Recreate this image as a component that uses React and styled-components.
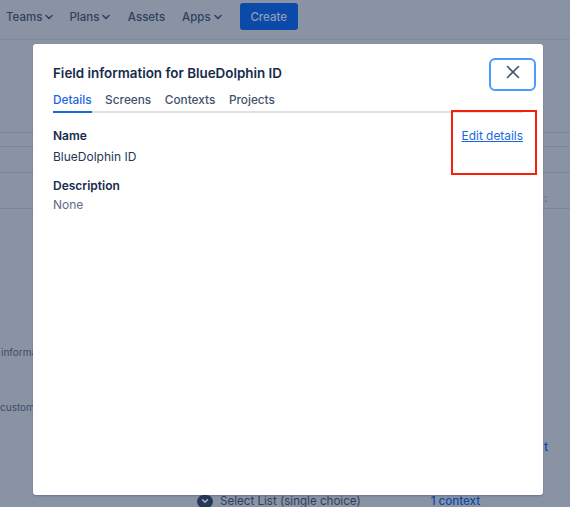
import React from 'react'
import styled, { createGlobalStyle } from 'styled-components'
import { ChevronDown, X } from 'lucide-react'

const Global = createGlobalStyle`
  html, body {
    margin: 0;
    padding: 0;
    height: 100%;
    overflow: hidden;
    background: #8993a4;
  }
  body {
    font-family: Inter, "Liberation Sans", sans-serif;
    -webkit-font-smoothing: antialiased;
  }
`

const Page = styled.div`
  position: relative;
  width: 570px;
  height: 507px;
  overflow: hidden;
  background: #8993a4;
  color: #253858;
`

const Nav = styled.nav`
  display: flex;
  align-items: center;
  height: 40px;
  padding: 0 0 6px 6px;
  border-bottom: 1px solid #7f899b;
  box-sizing: border-box;
`

const NavItem = styled.span`
  display: flex;
  align-items: center;
  margin-right: ${p => p.$gap}px;
  font-size: 11.5px;
  font-weight: 500;
  color: #2f3f5e;
`

const NavChevron = styled(ChevronDown)`
  margin: 1px 1px 0;
`

const CreateButton = styled.span`
  display: flex;
  align-items: center;
  justify-content: center;
  width: 58px;
  height: 27px;
  margin-left: 6px;
  border-radius: 3px;
  background: #0b4aa8;
  color: #8f9db5;
  font-size: 11.5px;
  font-weight: 500;
`

const Rule = styled.div`
  height: 1px;
  margin-top: ${p => p.$top}px;
  background: #7c8698;
`

const Fragmented = styled.div`
  font-size: 10px;
  color: #3d4c68;
  white-space: nowrap;
  margin-top: ${p => p.$top}px;
  padding-left: ${p => p.$left}px;
`

const BottomRow = styled.div`
  display: flex;
  align-items: center;
  margin-top: 81px;
  padding-left: 197px;
  font-size: 11.6px;
  color: #2f3f5e;
`

const TypeBadge = styled.span`
  display: flex;
  align-items: center;
  justify-content: center;
  width: 16px;
  height: 13px;
  margin-right: 7px;
  border-radius: 7px;
  background: #253858;
  color: #aab4c5;
`

const ContextLink = styled.span`
  margin-left: 70px;
  color: #0b4aa8;
  font-weight: 500;
`

const StrayLetter = styled.span`
  position: absolute;
  top: 439px;
  left: 544px;
  font-size: 12px;
  font-weight: 500;
  color: #0b4aa8;
`

const StrayMark = styled.span`
  position: absolute;
  top: 191px;
  left: 544px;
  font-size: 11px;
  font-weight: 500;
  color: #5a6780;
`

const Modal = styled.section`
  position: absolute;
  top: 44px;
  left: 33px;
  width: 510px;
  height: 451px;
  box-sizing: border-box;
  padding: 21px 20px 0;
  border-radius: 3px;
  background: #fff;
  box-shadow: 0 1px 2px rgba(9, 30, 66, 0.25);
`

const Title = styled.h2`
  margin: 0;
  font-size: 13.4px;
  line-height: 17px;
  font-weight: 600;
  color: #172b4d;
`

const Tabs = styled.div`
  display: flex;
  gap: 13.6px;
  margin-top: 11px;
  border-bottom: 2px solid #dfe1e6;
`

const Tab = styled.span`
  padding-bottom: 3px;
  margin-bottom: -2px;
  font-size: 11.8px;
  line-height: 15px;
  font-weight: 500;
  color: ${p => (p.$active ? '#1868e0' : '#42526e')};
  border-bottom: 2px solid ${p => (p.$active ? '#1868e0' : 'transparent')};
`

const Fields = styled.div`
  display: flex;
  align-items: flex-start;
  justify-content: space-between;
  margin-top: 15px;
`

const Label = styled.div`
  margin-top: ${p => p.$top || 0}px;
  font-size: 12px;
  line-height: 15px;
  font-weight: 600;
  color: #172b4d;
`

const Value = styled.div`
  margin-top: ${p => (p.$muted ? 4 : 6)}px;
  font-size: 12px;
  line-height: 15px;
  color: ${p => (p.$muted ? '#5e6c84' : '#253858')};
`

const EditLink = styled.a`
  font-size: 11.9px;
  line-height: 15px;
  color: #1868e0;
  text-decoration: underline;
`

const CloseButton = styled.button`
  position: absolute;
  top: 14px;
  right: 7px;
  display: flex;
  align-items: flex-start;
  justify-content: center;
  width: 47px;
  height: 33px;
  padding: 1px 0 0;
  box-sizing: border-box;
  border: 2px solid #4c9aff;
  border-radius: 6px;
  background: #fff;
  color: #42526e;
`

const Callout = styled.div`
  position: absolute;
  top: 110px;
  left: 451px;
  width: 86px;
  height: 65px;
  box-sizing: border-box;
  border: 2px solid #f5200c;
`

export default function App() {
  return (
    <Page>
      <Global />
      <Nav>
        <NavItem $gap={13}>Teams <NavChevron size={12} strokeWidth={3} /></NavItem>
        <NavItem $gap={14.5}>Plans <NavChevron size={12} strokeWidth={3} /></NavItem>
        <NavItem $gap={17}>Assets</NavItem>
        <NavItem $gap={9}>Apps <NavChevron size={12} strokeWidth={3} /></NavItem>
        <CreateButton>Create</CreateButton>
      </Nav>
      <Rule $top={92} />
      <Rule $top={13} />
      <Rule $top={25} />
      <Rule $top={35} />
      <Fragmented $top={137} $left={1}>informa</Fragmented>
      <Fragmented $top={43} $left={0}>custom</Fragmented>
      <BottomRow>
        <TypeBadge><ChevronDown size={10} strokeWidth={3.5} /></TypeBadge>
        Select List (single choice)
        <ContextLink>1 context</ContextLink>
      </BottomRow>
      <StrayLetter>t</StrayLetter>
      <StrayMark>:</StrayMark>
      <Modal>
        <Title>Field information for BlueDolphin ID</Title>
        <Tabs>
          <Tab $active>Details</Tab>
          <Tab>Screens</Tab>
          <Tab>Contexts</Tab>
          <Tab>Projects</Tab>
        </Tabs>
        <Fields>
          <div>
            <Label>Name</Label>
            <Value>BlueDolphin ID</Value>
            <Label $top={14}>Description</Label>
            <Value $muted>None</Value>
          </div>
          <EditLink href="#">Edit details</EditLink>
        </Fields>
        <CloseButton aria-label="Close"><X size={22} strokeWidth={1.75} /></CloseButton>
      </Modal>
      <Callout />
    </Page>
  )
}
